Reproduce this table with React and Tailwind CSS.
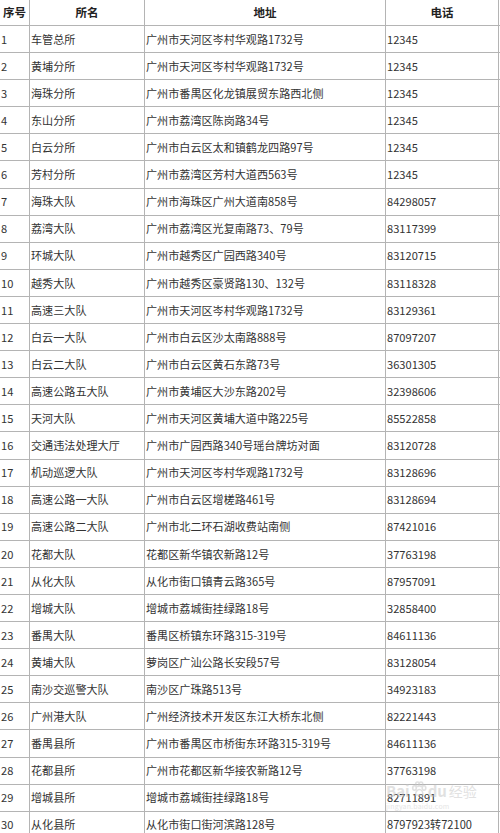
import React from "react"

const rows = [
  ["1", "车管总所", "广州市天河区岑村华观路1732号", "12345"],
  ["2", "黄埔分所", "广州市天河区岑村华观路1732号", "12345"],
  ["3", "海珠分所", "广州市番禺区化龙镇展贸东路西北侧", "12345"],
  ["4", "东山分所", "广州市荔湾区陈岗路34号", "12345"],
  ["5", "白云分所", "广州市白云区太和镇鹤龙四路97号", "12345"],
  ["6", "芳村分所", "广州市荔湾区芳村大道西563号", "12345"],
  ["7", "海珠大队", "广州市海珠区广州大道南858号", "84298057"],
  ["8", "荔湾大队", "广州市荔湾区光复南路73、79号", "83117399"],
  ["9", "环城大队", "广州市越秀区广园西路340号", "83120715"],
  ["10", "越秀大队", "广州市越秀区豪贤路130、132号", "83118328"],
  ["11", "高速三大队", "广州市天河区岑村华观路1732号", "83129361"],
  ["12", "白云一大队", "广州市白云区沙太南路888号", "87097207"],
  ["13", "白云二大队", "广州市白云区黄石东路73号", "36301305"],
  ["14", "高速公路五大队", "广州市黄埔区大沙东路202号", "32398606"],
  ["15", "天河大队", "广州市天河区黄埔大道中路225号", "85522858"],
  ["16", "交通违法处理大厅", "广州市广园西路340号瑶台牌坊对面", "83120728"],
  ["17", "机动巡逻大队", "广州市天河区岑村华观路1732号", "83128696"],
  ["18", "高速公路一大队", "广州市白云区增槎路461号", "83128694"],
  ["19", "高速公路二大队", "广州市北二环石湖收费站南侧", "87421016"],
  ["20", "花都大队", "花都区新华镇农新路12号", "37763198"],
  ["21", "从化大队", "从化市街口镇青云路365号", "87957091"],
  ["22", "增城大队", "增城市荔城街挂绿路18号", "32858400"],
  ["23", "番禺大队", "番禺区桥镇东环路315-319号", "84611136"],
  ["24", "黄埔大队", "萝岗区广汕公路长安段57号", "83128054"],
  ["25", "南沙交巡警大队", "南沙区广珠路513号", "34923183"],
  ["26", "广州港大队", "广州经济技术开发区东江大桥东北侧", "82221443"],
  ["27", "番禺县所", "广州市番禺区市桥街东环路315-319号", "84611136"],
  ["28", "花都县所", "广州市花都区新华接农新路12号", "37763198"],
  ["29", "增城县所", "增城市荔城街挂绿路18号", "82711891"],
  ["30", "从化县所", "从化市街口街河滨路128号", "8797923转72100"],
]

const font = { fontFamily: '"Noto Sans CJK SC", "Noto Sans", sans-serif' }

function Row({ cells, header }) {
  const rowCls = header ? "h-[26px]" : "h-[27.1px]"
  const base = header
    ? "font-bold text-[11.5px] text-[#222] justify-center"
    : "text-[11.1px] text-[#333] pl-[1px]"
  return (
    <div className={`flex border-b border-[#b4b4b4] ${rowCls}`}>
      <div className={`w-[30px] flex items-center border-r border-[#b4b4b4] whitespace-nowrap ${base}`}>{cells[0]}</div>
      <div className={`w-[115px] flex items-center border-r border-[#b4b4b4] whitespace-nowrap ${base}`}>{cells[1]}</div>
      <div className={`w-[241px] flex items-center border-r border-[#b4b4b4] whitespace-nowrap ${base}`}>{cells[2]}</div>
      <div className={`w-[113px] flex items-center border-r border-[#b4b4b4] whitespace-nowrap ${base}`}>{cells[3]}</div>
    </div>
  )
}

export default function App() {
  return (
    <div className="relative w-[500px] h-[833px] overflow-hidden bg-white" style={font}>
      <Row header cells={["序号", "所名", "地址", "电话"]} />
      {rows.map((r) => (
        <Row key={r[0]} cells={r} />
      ))}

      {/* watermark */}
      <div className="absolute left-[386px] top-[781px] flex flex-col items-start opacity-50 pointer-events-none">
        <div className="flex items-end text-[#c4c4c4] font-bold text-[15px] leading-none">
          <span>Bai</span>
          <svg width="16" height="16" viewBox="0 0 16 16" className="mx-[1px] mb-[1px]">
            <g fill="none" stroke="#c4c4c4" strokeWidth="1.6">
              <ellipse cx="3.5" cy="7" rx="1.8" ry="2.2" />
              <ellipse cx="6.5" cy="3.2" rx="1.8" ry="2.2" />
              <ellipse cx="10" cy="3.2" rx="1.8" ry="2.2" />
              <ellipse cx="13" cy="7" rx="1.8" ry="2.2" />
              <path d="M4.5 14 C4.5 10 7 8.5 8.3 8.5 C9.8 8.5 12 10 12 14 Z" />
            </g>
          </svg>
          <span className="mr-[2px]">du</span>
          <span className="text-[14px] font-normal">经验</span>
        </div>
        <div className="text-[7px] text-[#cccccc] mt-[3px] tracking-wide">jingyan.baidu.com</div>
      </div>
    </div>
  )
}
